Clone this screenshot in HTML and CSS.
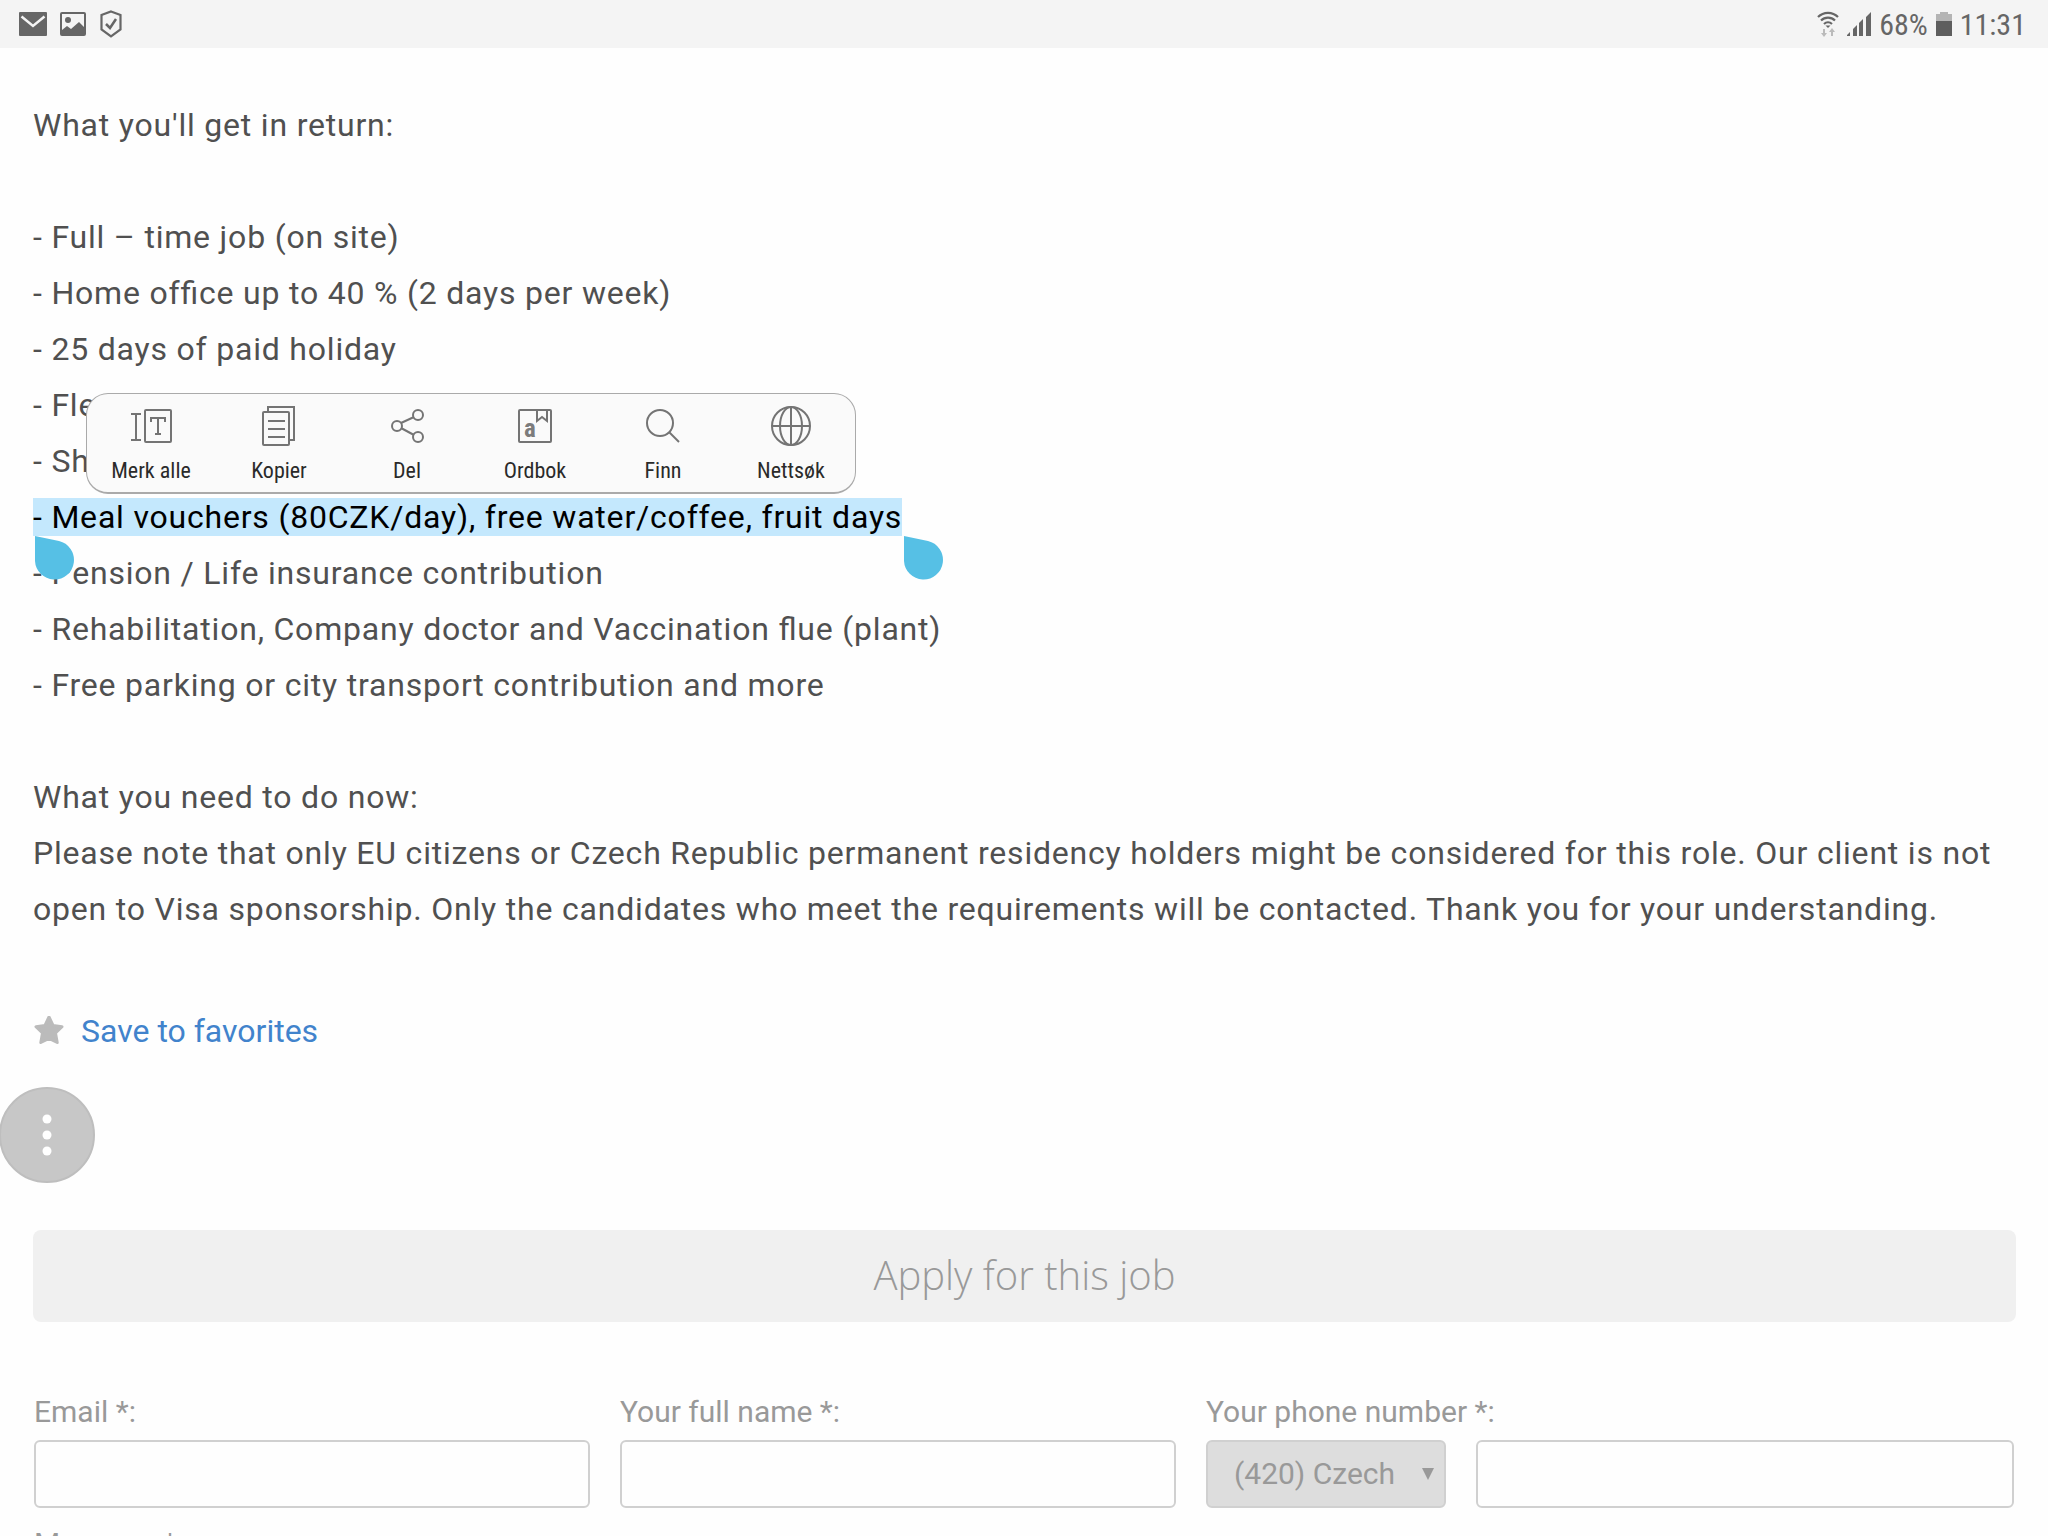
FILE: index.html
```html
<!DOCTYPE html>
<html lang="en">
<head>
    <meta charset="UTF-8">
    <meta name="viewport" content="width=device-width, initial-scale=1.0">
    <title>Apply for this job</title>
    <link rel="stylesheet" href="styles.css">
</head>
<body>
    <header class="statusbar">
        <div class="status-left">
            <svg width="28" height="24" viewBox="0 0 28 24"><rect width="28" height="24" rx="1" fill="#666"/><path d="M2.5 4.5L14 14 25.5 4.5" fill="none" stroke="#f4f4f4" stroke-width="2.5"/></svg>
            <svg width="26" height="24" viewBox="0 0 26 24"><rect x="1" y="1" width="24" height="22" rx="1" fill="none" stroke="#666" stroke-width="2"/><circle cx="8" cy="8" r="3" fill="#666"/><path d="M2 18l5-4 4 3 8-7 6 6v7H2z" fill="#666"/></svg>
            <svg width="24" height="28" viewBox="0 0 22 28"><path d="M11 1.5L20.500 5v14.500L11 26.500 1.500 19.500V5z" fill="none" stroke="#666" stroke-width="2.2"/><path d="M6 14l4 4 6-9" fill="none" stroke="#666" stroke-width="2.5"/></svg>
        </div>
        <div class="status-right">
            <svg width="22" height="26" viewBox="0 0 22 26"><path d="M1 6a14 14 0 0 1 20 0M4 9.500a10 10 0 0 1 14 0M7 13a6 6 0 0 1 8 0" fill="none" stroke="#666" stroke-width="2.2"/><path d="M8.500 14.500h5L11 17z" fill="#666"/><path d="M6 18h2v4h2l-3 4-3-4h2zM14 25h2v-4h2l-3-4-3 4h2z" fill="#bbb"/></svg>
            <svg width="24" height="24" viewBox="0 0 24 24"><path d="M0 24v-1l3-3v4zM6 24v-7l4-4v11zM12 24V11l4-4v17zM19 24V5l5-5v24z" fill="#666"/></svg>
            <span>68%</span>
            <svg width="16" height="24" viewBox="0 0 16 24"><path d="M4 0h8v2h4v7H0V2h4z" fill="#b4b4b4"/><path d="M0 9h16v15H0z" fill="#5e5e5e"/></svg>
            <span>11:31</span>
        </div>
    </header>

    <main>
        <p class="description">
            What you'll get in return:<br>
            <br>
            - Full – time job (on site)<br>
            - Home ofﬁce up to 40 % (2 days per week)<br>
            - 25 days of paid holiday<br>
            - Fle<br>
            - Sh<br>
            <span class="selected">- Meal vouchers (80CZK/day), free water/coffee, fruit days<svg class="handle handle-start" width="40" height="45" viewBox="0 0 40 45"><path d="M0 0L24 5A19.500 19.500 0 1 1 0 25z"/></svg><svg class="handle handle-end" width="40" height="45" viewBox="0 0 40 45"><path d="M0 0L24 5A19.500 19.500 0 1 1 0 25z"/></svg></span><br>
            - Pension / Life insurance contribution<br>
            - Rehabilitation, Company doctor and Vaccination ﬂue (plant)<br>
            - Free parking or city transport contribution and more<br>
            <br>
            What you need to do now:<br>
            Please note that only EU citizens or Czech Republic permanent residency holders might be considered for this role. Our client is not open to Visa sponsorship. Only the candidates who meet the requirements will be contacted. Thank you for your understanding.
        </p>

        <a href="#" class="favorite">
            <svg width="30" height="30" viewBox="0 0 30 30"><path d="M15 1l4 8.500 9 1.200-6.500 6.300 1.700 9.500L15 22.500 6.800 26.500 8.500 17 2 10.700l9-1.200z" fill="#bbb" stroke="#bbb" stroke-width="3" stroke-linejoin="round"/></svg>
            Save to favorites
        </a>

        <button type="button" class="apply">Apply for this job</button>

        <form class="fields">
            <div class="field">
                <label for="email">Email *:</label>
                <input type="email" id="email">
            </div>
            <div class="field">
                <label for="name">Your full name *:</label>
                <input type="text" id="name">
            </div>
            <div class="field">
                <label for="phone">Your phone number *:</label>
                <div class="phone">
                    <div class="select">
                        <select id="prefix" aria-label="Country code">
                            <option>(420) Czech</option>
                        </select>
                    </div>
                    <input type="tel" id="phone">
                </div>
            </div>
            <div class="field wide">
                <label for="message">Message *:</label>
                <textarea id="message"></textarea>
            </div>
        </form>
    </main>

    <!-- text selection popup -->
    <div class="toolbar">
        <button type="button">
            <svg width="44" height="44" viewBox="0 0 44 44"><path d="M2 9h10M2 35h10M7 9v26" /><rect x="16" y="5" width="26" height="32" rx="1"/><path d="M22 17v-4h14v4M29 13v16M26 29h6"/></svg>
            Merk alle
        </button>
        <button type="button">
            <svg width="44" height="44" viewBox="0 0 44 44"><rect x="6" y="7" width="26" height="33" rx="1"/><path d="M11 7V2h26v33h-5M11 16h17M11 24h17M11 32h17"/></svg>
            Kopier
        </button>
        <button type="button">
            <svg width="44" height="44" viewBox="0 0 44 44"><circle cx="12" cy="21" r="5"/><circle cx="33" cy="10" r="5"/><circle cx="33" cy="32" r="5"/><path d="M16 18l13-6M16 23l13 7"/></svg>
            Del
        </button>
        <button type="button">
            <svg width="44" height="44" viewBox="0 0 44 44"><rect x="6" y="5" width="32" height="32" rx="1"/><path d="M24 5v11l5-4 5 4V5"/><text x="11" y="32">a</text></svg>
            Ordbok
        </button>
        <button type="button">
            <svg width="44" height="44" viewBox="0 0 44 44"><circle cx="19" cy="18" r="13"/><path d="M28 27l10 10"/></svg>
            Finn
        </button>
        <button type="button">
            <svg width="44" height="44" viewBox="0 0 44 44"><circle cx="22" cy="21" r="19"/><ellipse cx="22" cy="21" rx="11" ry="19"/><path d="M22 2v38M3 21h38"/></svg>
            Nettsøk
        </button>
    </div>

    <button type="button" class="bubble" aria-label="More">
        <svg width="10" height="42" viewBox="0 0 10 42" fill="#fff"><circle cx="5" cy="5" r="4.500"/><circle cx="5" cy="21" r="4.500"/><circle cx="5" cy="37" r="4.500"/></svg>
    </button>
</body>
</html>
```
FILE: styles.css
```css
* {
    box-sizing: border-box;
}

body {
    position: relative;
    height: 100vh;
    margin: 0;
    overflow: hidden;
    background-color: #fefefe;
    color: #505050;
    font-family: Roboto, sans-serif;
    font-size: 32px;
}

svg {
    flex: none;
}

.statusbar {
    display: flex;
    justify-content: space-between;
    align-items: center;
    height: 48px;
    padding: 0 22px 0 19px;
    background-color: #f4f4f4;
    color: #666;
    font-family: "Roboto Condensed", Roboto, sans-serif;
    font-size: 30px;
    font-stretch: condensed;
}

.status-left {
    display: flex;
    align-items: center;
    gap: 13px;
}

.status-right {
    display: flex;
    align-items: center;
    gap: 8px;
}

main {
    padding: 49px 32px 0 33px;
}

.description {
    margin: 0;
    line-height: 56px;
    letter-spacing: 0.025em;
}

.selected {
    position: relative;
    background-color: #c4e8fd;
    color: #000;
}

.handle {
    position: absolute;
    top: 100%;
    margin-left: 2px;
    fill: #56c0e5;
}

.handle-start {
    left: 0;
}

.handle-end {
    left: 100%;
}

.favorite {
    display: flex;
    align-items: center;
    gap: 17px;
    margin-top: 66px;
    padding-left: 1px;
    line-height: 56px;
    color: #4183cc;
    text-decoration: none;
}

.apply {
    display: block;
    width: 100%;
    height: 92px;
    margin-top: 171px;
    padding: 0 0 4px;
    border: none;
    border-radius: 8px;
    background-color: #f0f0f0;
    color: #999;
    font-family: "Open Sans", sans-serif;
    font-size: 40px;
    font-weight: 300;
}

.fields {
    display: grid;
    grid-template-columns: 556fr 556fr 808fr;
    gap: 0 30px;
    margin-top: 62px;
    padding: 0 2px 0 1px;
}

.field {
    display: flex;
    flex-direction: column;
    color: #999;
    font-size: 30px;
}

.field label {
    line-height: 56px;
}

.wide {
    grid-column: 1 / -1;
    margin-top: 8px;
}

input,
select,
textarea {
    width: 100%;
    height: 68px;
    border: 2px solid #d0d0d0;
    border-radius: 6px;
    background-color: #fefefe;
    color: #999;
    font: inherit;
}

.phone {
    display: flex;
    gap: 30px;
}

.select {
    position: relative;
    flex: none;
    width: 240px;
}

.select::after {
    content: "";
    position: absolute;
    top: 28px;
    right: 12px;
    border: 6px solid transparent;
    border-top: 12px solid #999;
    border-bottom: none;
}

select {
    appearance: none;
    padding: 0 26px 2px;
    background-color: #ddd;
}

.toolbar {
    position: absolute;
    top: 393px;
    left: 86px;
    display: flex;
    border: 1px solid #aaa;
    border-bottom-width: 2px;
    border-radius: 22px;
    background-color: #fafafa;
}

.toolbar button {
    display: flex;
    flex-direction: column;
    align-items: center;
    gap: 8px;
    width: 128px;
    height: 98px;
    padding: 11px 0 0;
    border: none;
    background: none;
    color: #2a2a2a;
    font-family: "Roboto Condensed", Roboto, sans-serif;
    font-size: 22px;
    font-stretch: condensed;
    line-height: 28px;
}

.toolbar svg {
    fill: none;
    stroke: #747474;
    stroke-width: 2;
}

.toolbar text {
    fill: #7c7c7c;
    stroke: none;
    font-family: Roboto, sans-serif;
    font-size: 25px;
    font-weight: 700;
}

.bubble {
    position: absolute;
    top: 1087px;
    left: -1px;
    display: flex;
    justify-content: center;
    align-items: center;
    width: 96px;
    height: 96px;
    padding: 0;
    border: 2px solid #bebebe;
    border-radius: 50%;
    background-color: #c7c7c7;
}
```
